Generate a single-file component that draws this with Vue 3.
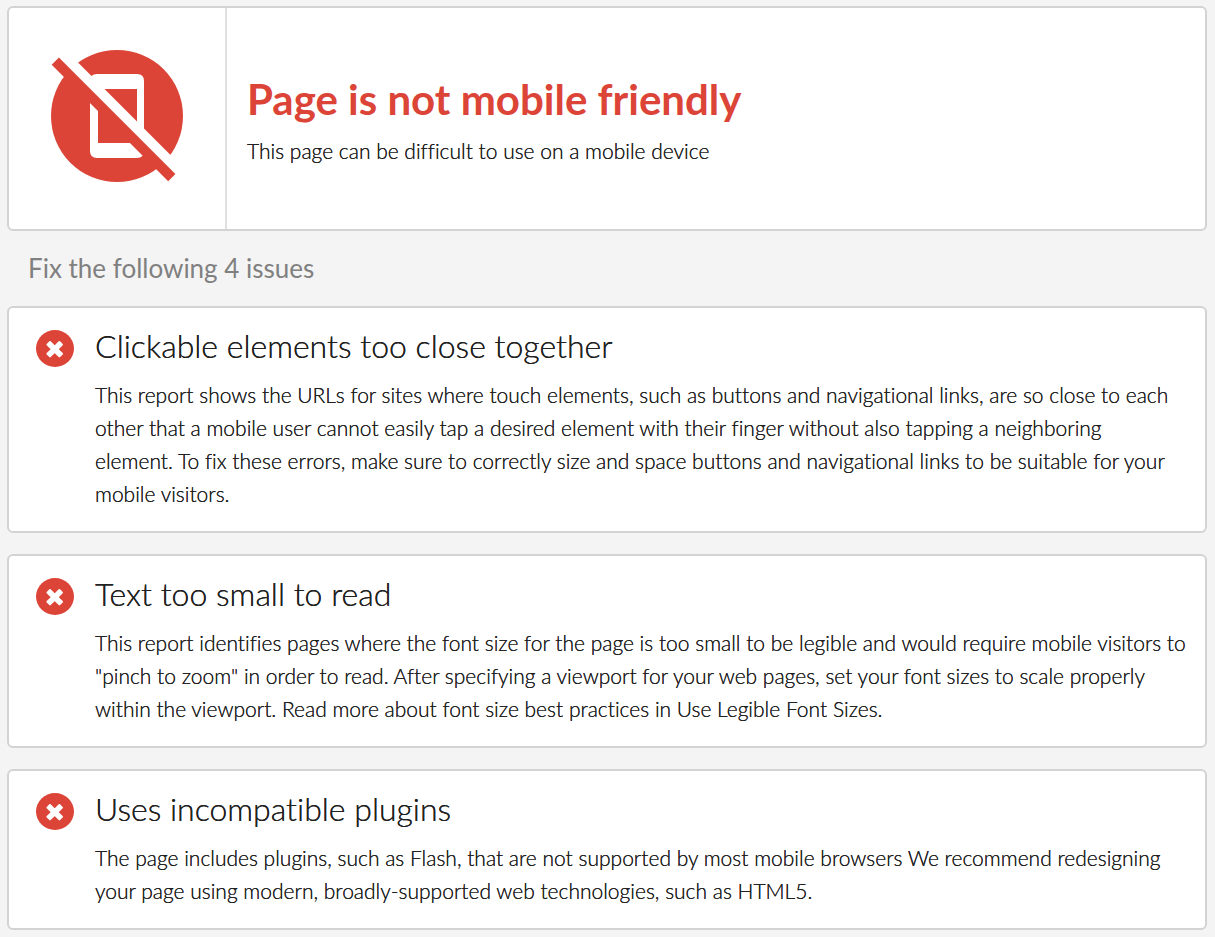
<template>
  <main class="report">
    <section class="card summary">
      <div class="summary-icon">
        <svg viewBox="0 0 132 132" aria-hidden="true">
          <circle cx="66" cy="66" r="66" fill="#db4437" />
          <path
            d="M46 24H86Q93 24 93 31V101Q93 108 86 108H46Q39 108 39 101V31Q39 24 46 24ZM47 39V93H86V39Z"
            fill="#fff"
            fill-rule="evenodd"
          />
          <path d="M0 -14.5L140 125.5V140H132L-8 0V-14.5Z" fill="#fff" />
          <path d="M0.7 14.8L7.9 7.6L124.4 124.1L117.2 131.3Z" fill="#db4437" />
        </svg>
      </div>
      <div class="summary-text">
        <h1>Page is not mobile friendly</h1>
        <p>This page can be difficult to use on a mobile device</p>
      </div>
    </section>

    <h2 class="issues-heading">Fix the following {{ totalIssues }} issues</h2>

    <section class="card issue" v-for="issue in issues" :key="issue.title">
      <svg class="issue-icon" viewBox="0 0 38 37" aria-hidden="true">
        <ellipse cx="19" cy="18.5" rx="19" ry="18.5" fill="#db4437" />
        <path
          d="M14 12L18.7 16.6L23.4 12L26 14.6L21.3 19.2L26 23.8L23.4 26.4L18.7 21.8L14 26.4L11.4 23.8L16.1 19.2L11.4 14.6Z"
          fill="#fff"
          stroke="#fff"
          stroke-width="2"
          stroke-linejoin="round"
        />
      </svg>
      <div class="issue-text">
        <h3>{{ issue.title }}</h3>
        <p>{{ issue.text }}</p>
      </div>
    </section>
  </main>
</template>

<script setup>
const totalIssues = 4

const issues = [
  {
    title: "Clickable elements too close together",
    text: "This report shows the URLs for sites where touch elements, such as buttons and navigational links, are so close to each other that a mobile user cannot easily tap a desired element with their finger without also tapping a neighboring element.\u00a0To fix these errors, make sure to correctly size and space buttons and navigational links to be suitable for your mobile visitors."
  },
  {
    title: "Text too small to read",
    text: 'This report identifies pages where the font size for the page is too small to be legible and would require mobile visitors to "pinch to zoom" in order to read. After specifying a viewport for your web pages, set your font sizes to scale properly within the viewport. Read more about font size best practices in Use Legible Font Sizes.'
  },
  {
    title: "Uses incompatible plugins",
    text: "The page includes plugins, such as Flash, that are not supported by most mobile browsers We recommend redesigning your page using modern, broadly-supported web technologies, such as HTML5."
  }
]
</script>

<style>
body {
  margin: 0;
  background-color: #f4f4f4;
}
</style>

<style scoped>
.report {
  padding: 6px 8px 8px 7px;
  font-family: Lato, sans-serif;
  font-variant-ligatures: none;
  color: #212121;
}

h1,
h2,
h3,
p {
  margin: 0;
}

.card {
  display: flex;
  background-color: #fff;
  border: 2px solid #d3d3d3;
  border-radius: 6px;
}

.summary-icon {
  padding: 42px;
  border-right: 2px solid #e0e0e0;
}

.summary-icon svg {
  display: block;
  width: 132px;
  height: 132px;
  margin-bottom: 5px;
}

.summary-text {
  padding: 63px 20px 0;
}

h1 {
  font-size: 42px;
  line-height: 56px;
  font-weight: 700;
  color: #db4437;
}

/* the shadow firms up the thin strokes of the light weight */
h3,
p {
  font-weight: 300;
  text-shadow: 0 0 0 #212121;
}

p {
  font-size: 21px;
  line-height: 33px;
}

.summary-text p {
  margin-top: 7px;
}

.issues-heading {
  padding: 17px 21px 18px;
  font-size: 26px;
  line-height: 40px;
  font-weight: 400;
  color: #808080;
}

.issue {
  gap: 21px;
  padding: 16px 14px 21px 27px;
  margin-bottom: 21px;
}

.issue-icon {
  flex: none;
  width: 38px;
  height: 37px;
  margin-top: 6px;
}

h3 {
  margin-bottom: 10px;
  font-size: 32px;
  line-height: 44px;
}
</style>
